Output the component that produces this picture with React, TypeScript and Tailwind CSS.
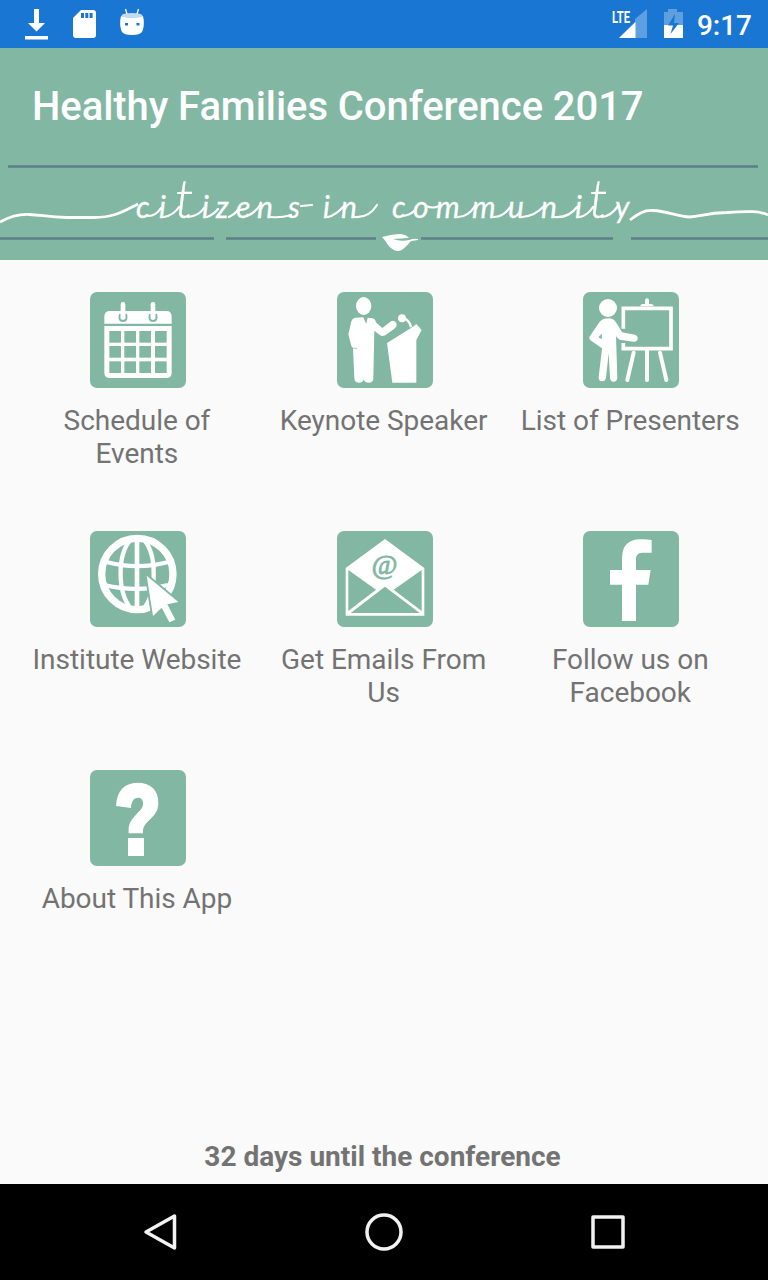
import type { ReactNode } from "react";

const GREEN = "#81b7a3";

function IconBox({ children }: { children: ReactNode }) {
  return (
    <svg viewBox="18 18 288 288" className="ml-[1.2px] h-24 w-24 shrink-0 rounded-[7px] bg-[#81b7a3]" fill="white">
      {children}
    </svg>
  );
}

function CalendarIcon() {
  return (
    <IconBox>
      <path d="M61 113V92Q61 75 78 75H247Q263 75 263 92V113Z" />
      <path d="M61 120H263V260Q263 276 247 276H78Q61 276 61 260Z" />
      <g fill={GREEN}>
        {[135, 180, 226].map((y) =>
          [76, 121, 166, 213].map((x) => <rect key={`${x}-${y}`} x={x} y={y} width="35" height="35" />),
        )}
      </g>
      <g fill="none" stroke={GREEN} strokeWidth="6">
        <path d="M108 84Q102 105 117 105Q132 105 126 84" />
        <path d="M198 84Q192 105 207 105Q222 105 216 84" />
      </g>
      <path d="M117 55V89M207 55V89" stroke="white" strokeWidth="14" strokeLinecap="round" />
    </IconBox>
  );
}

function KeynoteIcon() {
  return (
    <IconBox>
      <ellipse cx="98" cy="60" rx="23" ry="27" />
      <path d="M72 95L97 94L106 112L110 95L126 97Q133 99 136 110L154 126L180 106Q190 101 196 111Q200 120 190 128L163 148Q154 153 146 147L130 134L127 278Q125 291 112 290Q102 290 98 281Q94 291 82 290Q70 289 70 276L66 187L61 180L52 145L61 106Q64 97 72 95Z" />
      <path d="M99 95L106 112" stroke={GREEN} strokeWidth="2" />
      <path d="M64 187H78" stroke={GREEN} strokeWidth="2" />
      <circle cx="213" cy="97" r="12" />
      <path d="M221 98Q236 105 240 124" fill="none" stroke="white" strokeWidth="7" />
      <path d="M168 171L246 122L256 114L272 132L256 162V290H184Z" />
    </IconBox>
  );
}

function PresenterIcon() {
  return (
    <IconBox>
      <circle cx="93" cy="66" r="27" />
      <path d="M82 98Q98 94 110 101Q116 104 135 139L174 146Q183 149 182 159Q180 169 169 167L128 161Q121 158 117 150L121 276Q120 287 110 287Q100 287 99 276L95 202L87 275Q84 287 74 286Q64 285 65 273L75 187L40 163Q34 156 39 150L67 109Q73 100 82 98ZM75 143L64 153L74 160Z" />
      <path d="M139 128V67H282V188H139V171" fill="none" stroke="white" strokeWidth="11" />
      <path d="M190 61Q190 54 198 54H204V42Q205 37 210 37Q215 37 216 42V54H222Q230 54 230 61Z" />
      <path d="M170 200L151 282M210 196V282M249 200L268 282" stroke="white" strokeWidth="12" strokeLinecap="round" />
    </IconBox>
  );
}

function GlobeIcon() {
  return (
    <IconBox>
      <g fill="none" stroke="white">
        <circle cx="160" cy="147" r="107" strokeWidth="22" />
        <path d="M159 40V254" strokeWidth="14" />
        <path d="M142 42C98 88 100 204 142 252M178 42C220 88 219 204 178 252" strokeWidth="13" />
        <path d="M67 111Q160 136 253 111M62 180Q155 203 252 180" strokeWidth="13" />
      </g>
      <path
        d="M188 152L283 231L250 238L274 284L256 292L233 248L207 273Z"
        stroke={GREEN}
        strokeWidth="11"
        strokeLinejoin="miter"
        paintOrder="stroke"
      />
    </IconBox>
  );
}

function MailIcon() {
  return (
    <IconBox>
      <path d="M44 129L162 42L280 129V272H44ZM52 135V258L135 194ZM272 135L188 194L272 258ZM162 185L59 264H266Z" fillRule="evenodd" />
      <text x="160" y="147" textAnchor="middle" fontFamily="Liberation Serif" fontStyle="italic" fontSize="84" fill={GREEN} stroke={GREEN} strokeWidth="2.5">
        @
      </text>
    </IconBox>
  );
}

function FacebookIcon() {
  return (
    <IconBox>
      <path d="M135 288V179H99V135H135V98Q136 44 190 43Q207 42 224 45V83H195Q177 83 177 103V135H221L214 179H177V288Z" />
    </IconBox>
  );
}

function QuestionIcon() {
  return (
    <IconBox>
      <path d="M96 126C99 80 120 57 160 56C202 56 223 80 223 116C223 140 212 153 197 167C182 182 176 188 177 208H134C132 181 139 170 156 152C171 137 177 132 177 118C177 107 171 101 162 101C149 101 142 112 141 132Z" />
      <path d="M132 222H180V276H132Z" />
    </IconBox>
  );
}

const items = [
  { label: "Schedule of Events", Icon: CalendarIcon },
  { label: "Keynote Speaker", Icon: KeynoteIcon },
  { label: "List of Presenters", Icon: PresenterIcon },
  { label: "Institute Website", Icon: GlobeIcon },
  { label: "Get Emails From Us", Icon: MailIcon },
  { label: "Follow us on Facebook", Icon: FacebookIcon },
  { label: "About This App", Icon: QuestionIcon },
];

function StatusBar() {
  return (
    <div className="flex h-12 shrink-0 items-center justify-between bg-[#1976d2] pr-4">
      <svg width="160" height="48" fill="white">
        <path d="M34 9H39V23H45L36.5 31.5L28 23H34ZM25 36H48V39.5H25Z" />
        <path d="M81 10H93Q96 10 96 13V35Q96 38 93 38H76Q73 38 73 35V18Z" />
        <path d="M81 13H84V18H81ZM85.300 13H88.300V18H85.300ZM89.600 13H92.600V18H89.600Z" fill="#1976d2" />
        <path d="M121 16Q132 19 143 16Q145 24 142.500 31Q141 35 132 35Q123 35 121.500 31Q119 24 121 16Z" />
        <ellipse cx="132" cy="15.500" rx="10.500" ry="2.500" fill="#c3daf3" />
        <path d="M125.500 9L127 14M138.500 9L137 14" stroke="white" strokeWidth="1.300" />
        <path d="M125 23H128V25.500H125ZM136.500 23H139.500V25.500H136.500Z" fill="#1976d2" />
      </svg>
      <div className="flex items-center">
        <svg width="86" height="48" fill="white">
          <path d="M36 9V38H8L24 22V19Z" fill="#5e9fe0" />
          <path d="M24.500 22V38H8Z" />
          <text x="1" y="22.500" textLength="18" lengthAdjust="spacingAndGlyphs" fontFamily="Roboto" fontSize="17" fontWeight="700">LTE</text>
          <path d="M57 9H66V12H72V25H53V12H57Z" fill="#5e9fe0" />
          <path d="M53 25H72V38H53Z" />
          <path d="M64 14L57 25.500H62L59.500 34L68 23H63Z" fill="#1976d2" />
        </svg>
        <span className="pt-[3px] font-['Roboto',sans-serif] text-[28px] leading-[45px] font-medium text-white">9:17</span>
      </div>
    </div>
  );
}

function Banner() {
  return (
    <svg width="768" height="96" viewBox="0 164 768 96" className="block" fill="none">
      <path d="M8 166.500H758M0 238.500H214M226 238.500H376M421 238.500H613M631 238.500H768" stroke="#5f7f86" strokeWidth="2.500" />
      <path d="M0 222C11 216 19 214 29 214.500C42 215 47 217 67 217.500H92C114 218 124 211 138 204" stroke="white" strokeWidth="2.800" />
      <path d="M630 220C638 214 644 210 653 210.500C667 211 678 217 690 217C701 216 708 213 727 212.500C748 211 760 211 768 215" stroke="white" strokeWidth="2.800" />
      <g
        fill="white"
        stroke="white"
        strokeWidth="0.300"
        fontFamily="Lato, sans-serif"
        fontStyle="italic"
        fontWeight="400"
        fontSize="30"
        style={{ fontVariantLigatures: "none" }}
      >
        <text x="136 159 175 202 216 236 257 288" y="217.500">
          ci<tspan fontSize="54" fontWeight="300">t</tspan>izens
        </text>
        <text x="323 341" y="217.500">in</text>
        <text x="392 413 436 472 508 541 575 589 615" y="217.500">
          communi<tspan fontSize="54" fontWeight="300">t</tspan>y
        </text>
      </g>
      <path
        d="M148 216Q156 216 161 208M164 217Q174 215 179 207M188 217Q199 216 204 208M207 217Q213 215 218 209M229 217Q234 215 238 210M247 216Q255 213 260 205M271 217Q281 218 291 215M301 206L312 205M328 217Q336 215 344 206M355 217Q369 218 377 205M403 216Q410 215 414 211M426 206Q433 209 439 206M458 217Q468 217 475 206M494 217Q504 217 511 206M522 217Q535 216 544 206M555 217Q569 218 577 207M580 217Q588 215 593 207M602 217Q611 216 618 206"
        stroke="white"
        strokeWidth="2.200"
        strokeLinecap="round"
      />
      <path d="M382 237Q393 234 401 234Q407 235 409 238L393 239Q401 242 409 240Q414 238 418 239V240L411 241Q403 251 398 251Q393 251 388 245Q385 240 382 237Z" fill="white" />
    </svg>
  );
}

export default function App() {
  return (
    <main className="flex h-[1280px] w-[768px] flex-col overflow-hidden bg-[#fafafa] font-['Roboto',sans-serif]">
      <StatusBar />
      <header className="flex h-[212px] shrink-0 flex-col bg-[#81b7a3]">
        <h1 className="h-[116px] pl-8 text-[40px] leading-[118px] font-medium tracking-[-0.07px] text-white">Healthy Families Conference 2017</h1>
        <Banner />
      </header>
      <section className="grid grow auto-rows-[239px] grid-cols-3 px-[14px] pt-8">
        {items.map(({ label, Icon }) => (
          <div key={label} className="flex flex-col items-center gap-4 px-3">
            <Icon />
            <span className="mr-[0.8px] text-center text-[28px] leading-[33px] tracking-[-0.03px] text-[#737373]">{label}</span>
          </div>
        ))}
      </section>
      <p className="h-[55px] shrink-0 pr-[3px] text-center text-[28px] leading-[55px] font-bold text-[#737373]">32 days until the conference</p>
      <nav className="flex h-24 shrink-0 items-center bg-black">
        <svg width="768" height="96" fill="none" stroke="#f2f2f2" strokeWidth="3.500" strokeLinejoin="round">
          <path d="M174.500 32V64L146 48Z" />
          <circle cx="384" cy="48" r="17" />
          <rect x="593" y="33" width="30" height="30" />
        </svg>
      </nav>
    </main>
  );
}
